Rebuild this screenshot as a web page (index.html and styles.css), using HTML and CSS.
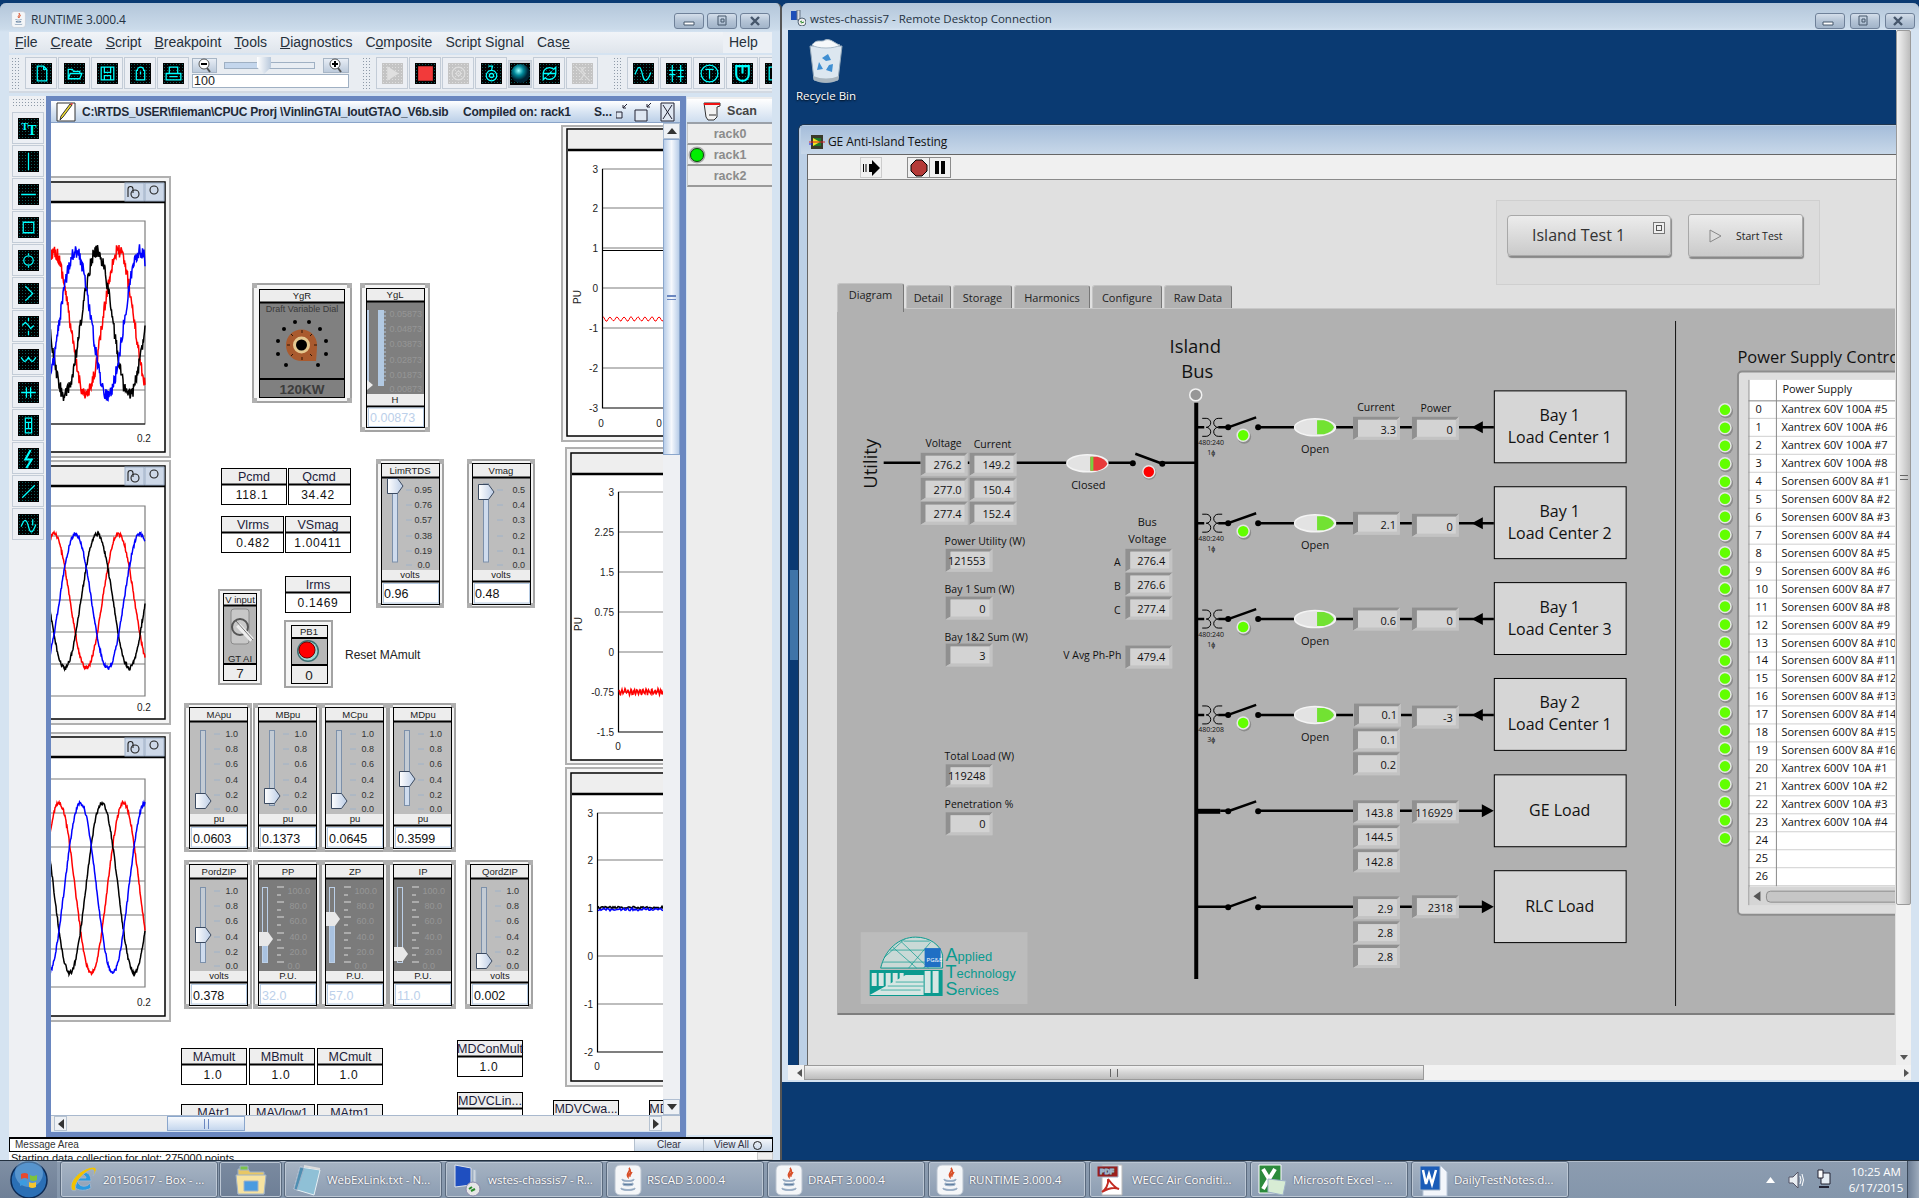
FILE: index.html
```html
<!DOCTYPE html>
<html lang="en">
<head>
<meta charset="utf-8">
<title>RUNTIME and Remote Desktop</title>
<link rel="stylesheet" href="styles.css">
</head>
<body>
<svg class="defs" width="0" height="0" aria-hidden="true">
  <defs>
    <linearGradient id="thumbfill" x1="0" x2="1"><stop offset="0" stop-color="#fff"/><stop offset="1" stop-color="#bccde6"/></linearGradient>
    <radialGradient id="ball" cx=".4" cy=".35"><stop offset="0" stop-color="#9ff"/><stop offset=".5" stop-color="#089"/><stop offset="1" stop-color="#023"/></radialGradient>
    <symbol id="java" viewBox="0 0 28 32"><rect x="1" y="1" width="26" height="30" rx="5" fill="#f4f6f8" stroke="#b9c3cf"/><path d="M15 4c3 3-4 5-1 9 0-3 5-4 1-9zM18 8c-1 2-3 3-2 5" fill="none" stroke="#d8502a" stroke-width="1.5"/><path d="M8 15c2 2 10 2 12 0v1c-1 2-11 2-12 0zM9 19c2 1 8 1 10 0v2c-2 1-8 1-10 0zM7 24c3 2 11 2 14 0v1c-3 2-11 2-14 0z" fill="#5a7a9c"/></symbol>
  </defs>
</svg>

<section class="win win-left">
  <header class="titlebar">
    <svg class="ti-java" width="15" height="17"><use href="#java"/></svg>
    <span class="title-text">RUNTIME 3.000.4</span>
    <div class="wcs">
      <button class="wc"><svg width="12" height="10"><path d="M1 6h10v3H1z" fill="#fff" stroke="#45566b"/></svg></button>
      <button class="wc"><svg width="12" height="12"><path d="M2 1h8v9H2zM5 4h3v3H5z" fill="none" stroke="#45566b"/></svg></button>
      <button class="wc"><svg width="12" height="12"><path d="M2 2l8 8M10 2l-8 8" stroke="#45566b" stroke-width="2.4"/></svg></button>
    </div>
  </header>
  <nav class="menubar">
    <span><u>F</u>ile</span><span><u>C</u>reate</span><span><u>S</u>cript</span><span><u>B</u>reakpoint</span><span><u>T</u>ools</span><span><u>D</u>iagnostics</span><span>C<u>o</u>mposite</span><span>Script Si<u>g</u>nal</span><span>Cas<u>e</u></span>
    <span class="help">Help</span>
  </nav>
  <div class="toolbar">
    <i class="grip"></i>
    <button class="tb"><span class="ti"><svg viewBox="0 0 20 20"><path d="M6 3h6l3 3v11H6zM12 3v3h3"/></svg></span></button>
    <button class="tb"><span class="ti"><svg viewBox="0 0 20 20"><path d="M4 15V6h4l1 2h6v2M4 15l2-5h11l-2 5z"/></svg></span></button>
    <button class="tb"><span class="ti"><svg viewBox="0 0 20 20"><path d="M4 4h12v12H4zM7 4v5h6V4M7 16v-4h6v4"/></svg></span></button>
    <button class="tb"><span class="ti"><svg viewBox="0 0 20 20"><path d="M7 7a3 3 0 0 1 6 0h1v9H6V7zM10 8v3"/></svg></span></button>
    <button class="tb"><span class="ti"><svg viewBox="0 0 20 20"><path d="M6 10V4h8v6M3 10h14v6H3zM6 13h8"/></svg></span></button>
    <div class="zoombox">
      <button class="zb"><svg width="18" height="15"><circle cx="8" cy="6" r="5" fill="#fff" stroke="#555"/><path d="M5 6h6" stroke="#000" stroke-width="2"/><path d="M11 10l3 4" stroke="#555" stroke-width="2"/></svg></button>
      <div class="zslider"><i class="zthumb"></i></div>
      <button class="zb"><svg width="18" height="15"><circle cx="8" cy="6" r="5" fill="#fff" stroke="#555"/><path d="M5 6h6M8 3v6" stroke="#000" stroke-width="2"/><path d="M11 10l3 4" stroke="#555" stroke-width="2"/></svg></button>
      <div class="zval">100</div>
    </div>
    <i class="grip g2"></i>
    <button class="tb"><span class="ti off"><svg viewBox="0 0 20 20"><path class="f" d="M5 3l11 7-11 7z"/></svg></span></button>
    <button class="tb"><span class="ti"><svg viewBox="0 0 20 20"><path class="r" d="M3 3h14v14H3z"/></svg></span></button>
    <button class="tb"><span class="ti off"><svg viewBox="0 0 20 20"><circle cx="10" cy="10" r="6"/><circle cx="10" cy="10" r="2"/></svg></span></button>
    <button class="tb"><span class="ti"><svg viewBox="0 0 20 20"><circle cx="10" cy="12" r="5"/><circle cx="10" cy="12" r="2"/><path d="M7 3h4l-1 4"/></svg></span></button>
    <button class="tb tb-s"><span class="ti"><svg viewBox="0 0 20 20"><circle class="ballc" cx="10" cy="10" r="9"/></svg></span></button>
    <button class="tb"><span class="ti"><svg viewBox="0 0 20 20"><path d="M4 10a6 6 0 0 1 10-4l2-2v6h-6l2-2M16 10a6 6 0 0 1-10 4l-2 2v-6h6l-2 2"/></svg></span></button>
    <button class="tb"><span class="ti off"><svg viewBox="0 0 20 20"><path d="M3 3l14 14M8 4l4 6-4 6M12 4l-3 4"/></svg></span></button>
    <i class="grip g3"></i>
    <button class="tb"><span class="ti"><svg viewBox="0 0 20 20"><path d="M2 11c3-9 5-9 7 0s5 6 8-2"/></svg></span></button>
    <button class="tb"><span class="ti"><svg viewBox="0 0 20 20"><path d="M6 2v16M14 2v16M3 7h6M11 13h6M3 11h6M11 7h6"/></svg></span></button>
    <button class="tb"><span class="ti"><svg viewBox="0 0 20 20"><circle cx="10" cy="10" r="8"/><path d="M6 6h8M10 6v9"/></svg></span></button>
    <button class="tb"><span class="ti"><svg viewBox="0 0 20 20"><path class="w2" d="M4 3h12v8a6 6 0 0 1-12 0zM10 3v7"/></svg></span></button>
    <button class="tb"><span class="ti"><svg viewBox="0 0 20 20"><path d="M4 4h12v12H4z"/></svg></span></button>
  </div>

  <div class="work">
    <aside class="toolcol">
      <i class="hgrip"></i>
      <button class="tb"><span class="ti"><svg viewBox="0 0 20 20"><text class="tt1" x="3" y="11">T</text><text class="tt2" x="9" y="16">T</text></svg></span></button>
      <button class="tb"><span class="ti"><svg viewBox="0 0 20 20"><path d="M10 2v16"/></svg></span></button>
      <button class="tb"><span class="ti"><svg viewBox="0 0 20 20"><path d="M3 10h14"/></svg></span></button>
      <button class="tb"><span class="ti"><svg viewBox="0 0 20 20"><path d="M5 5h10v10H5z"/></svg></span></button>
      <button class="tb"><span class="ti"><svg viewBox="0 0 20 20"><circle cx="10" cy="10" r="4.500"/><path d="M10 3v2M10 15v2"/></svg></span></button>
      <button class="tb"><span class="ti"><svg viewBox="0 0 20 20"><path d="M7 3l7 7-7 7"/></svg></span></button>
      <button class="tb"><span class="ti"><svg viewBox="0 0 20 20"><path d="M4 9l3-3 3 3 2 3 3-3M10 2v3M10 14v4"/></svg></span></button>
      <button class="tb"><span class="ti"><svg viewBox="0 0 20 20"><path d="M3 8c3 5 4 5 7 0 3 5 4 5 7 0"/></svg></span></button>
      <button class="tb"><span class="ti"><svg viewBox="0 0 20 20"><path d="M3 10h14M8 5v10M12 5v10"/></svg></span></button>
      <button class="tb"><span class="ti"><svg viewBox="0 0 20 20"><path d="M7 3h6v14H7zM7 7h6M7 13h6M10 7v6"/></svg></span></button>
      <button class="tb"><span class="ti"><svg viewBox="0 0 20 20"><path class="w2" d="M12 2L7 11h6l-5 8"/></svg></span></button>
      <button class="tb"><span class="ti"><svg viewBox="0 0 20 20"><path d="M4 16L16 4"/></svg></span></button>
      <button class="tb"><span class="ti"><svg viewBox="0 0 20 20"><path d="M3 12c3-8 5-8 7 0s4 6 7-2M14 5v6"/></svg></span></button>
    </aside>

    <div class="iframe">
      <header class="if-title">
        <svg class="pencil" width="20" height="20" viewBox="0 0 20 20"><path d="M1 1h18v18H1z" fill="#fff" stroke="#333"/><path d="M16 3L7 15l-3 3 1-4L14 2z" fill="#f5e030" stroke="#333"/><path d="M14 2l2 1 1-1-1-1z" fill="#e33"/></svg>
        <span class="if-path">C:\RTDS_USER\fileman\CPUC Prorj \VinlinGTAI_IoutGTAO_V6b.sib</span>
        <span class="if-comp">Compiled on: rack1</span>
        <span class="if-s">S...</span>
        <svg class="if-btn" width="60" height="20"><path d="M0 10h6v6H0zM19 8h12v11H19zM45 1h13v18H45z" fill="#dfe7f2" stroke="#223"/><path d="M11 2L7 6M7 3v3h3M35 1l-4 4M31 2v3h3M47 3l9 14M56 3l-9 14" fill="none" stroke="#223"/></svg>
      </header>
      <div class="if-mid">
        <div class="canvas">
<svg class="cv-svg" width="612" height="992" viewBox="51 124 612 992">
  <defs>
    <g id="th"><path d="M.5.5h10l5.500 7.500-5.500 7.500H.5z" fill="url(#thumbfill)" stroke="#3b4a60"/></g>
    <g id="thd"><path d="M0 0h9l5 7-5 7H0z" fill="#e8e8e8"/></g>
    <g id="sl">
      <rect x="1" y="1" width="66" height="147" fill="#f5f5f5" stroke="#a3a3a3" stroke-width="2"/>
      <path class="cn4" d="M0 0h5v5H0zM63 0h5v5h-5zM0 144h5v5H0zM63 144h5v5h-5z"/>
      <rect x="5.500" y="4.500" width="58" height="141" fill="#ededed" stroke="#000"/>
      <rect x="6" y="19" width="57" height="92" fill="currentColor"/>
      <path d="M6 18.500h57M6 122.500h57" stroke="#000" stroke-width="2"/>
      <rect x="7.500" y="124.500" width="55" height="19.500" fill="#fff" stroke="#b6cbe3"/>
    </g>
    <g id="sc1">
      <rect x="16.500" y="27.500" width="5" height="75" fill="#c3cbd4" stroke="#7c90aa"/>
      <path class="tk" d="M30 31h6M30 46h6M30 61h6M30 77h6M30 92h6M30 106h6"/>
    </g>
    <g id="t10"><text class="sn" x="54" y="34">1.0</text><text class="sn" x="54" y="49">0.8</text><text class="sn" x="54" y="64">0.6</text><text class="sn" x="54" y="80">0.4</text><text class="sn" x="54" y="95">0.2</text><text class="sn" x="54" y="109">0.0</text></g>
    <g id="sc2">
      <rect x="9.500" y="27.500" width="5" height="75" fill="#7b7b7b" stroke="#bcd0e8"/>
      <path class="tkd" d="M24 27h7M24 35h4M24 42h7M24 50h4M24 57h7M24 65h4M24 73h7M24 80h4M24 88h7M24 95h4M24 102h7"/>
      <text class="sd" x="57" y="34">100.0</text><text class="sd" x="54" y="49">80.0</text><text class="sd" x="54" y="64">60.0</text><text class="sd" x="54" y="80">40.0</text><text class="sd" x="54" y="95">20.0</text><text class="sd" x="47" y="109">0.0</text>
    </g>
    <g id="cell"><rect x=".5" y=".5" width="65" height="36" fill="#fff" stroke="#000"/><rect x="1" y="1" width="64" height="15" fill="#eee"/><path d="M0 16.500h66" stroke="#000" stroke-width="2"/></g>
    <g id="cell2"><rect x=".5" y=".5" width="62" height="36" fill="#fff" stroke="#000"/><rect x="1" y="1" width="61" height="15" fill="#eee"/><path d="M0 16.500h63" stroke="#000" stroke-width="2"/></g>
  </defs>

  <!-- left plots -->
  <g>
    <rect class="fo" x="20" y="178" width="150" height="280"/><rect class="fi" x="25" y="183" width="140" height="270"/>
    <rect class="hd" x="26" y="184" width="138" height="18"/><path class="hl" d="M26 203h139"/>
    <rect class="pb" x="125" y="184" width="19" height="18"/><rect class="pb" x="145" y="184" width="19" height="18"/>
    <path class="ph" d="M128 198v-8a2.500 2.500 0 0 1 5 0v4"/><circle class="ph" cx="135" cy="195" r="4"/><circle class="ph" cx="154" cy="191" r="4"/>
    <path class="gr" d="M40 222H145V425H40M40 255H145M40 289H145M40 323H145M40 357H145M40 391H145"/>
    <polyline id="p1r" class="wr"/><polyline id="p1k" class="wk"/><polyline id="p1b" class="wb"/>
    <path class="ax" d="M40 425H145"/>
    <text class="tk9" x="137" y="443">0.2</text>
  </g>
  <g>
    <rect class="fo" x="20" y="462" width="150" height="263"/><rect class="fi" x="25" y="467" width="140" height="253"/>
    <rect class="hd" x="26" y="468" width="138" height="18"/><path class="hl" d="M26 487h139"/>
    <rect class="pb" x="125" y="468" width="19" height="18"/><rect class="pb" x="145" y="468" width="19" height="18"/>
    <path class="ph" d="M128 482v-8a2.500 2.500 0 0 1 5 0v4"/><circle class="ph" cx="135" cy="479" r="4"/><circle class="ph" cx="154" cy="475" r="4"/>
    <path class="gr" d="M40 507H145V697H40M40 537H145M40 569H145M40 601H145M40 633H145M40 665H145"/>
    <polyline id="p2r" class="wr"/><polyline id="p2k" class="wk"/><polyline id="p2b" class="wb"/>
    <text class="tk9" x="137" y="712">0.2</text>
  </g>
  <g>
    <rect class="fo" x="20" y="734" width="150" height="288"/><rect class="fi" x="25" y="738" width="140" height="279"/>
    <rect class="hd" x="26" y="739" width="138" height="18"/><path class="hl" d="M26 758h139"/>
    <rect class="pb" x="125" y="739" width="19" height="18"/><rect class="pb" x="145" y="739" width="19" height="18"/>
    <path class="ph" d="M128 753v-8a2.500 2.500 0 0 1 5 0v4"/><circle class="ph" cx="135" cy="750" r="4"/><circle class="ph" cx="154" cy="746" r="4"/>
    <path class="gr" d="M40 780H145V988H40M40 814H145M40 848H145M40 882H145M40 916H145M40 950H145"/>
    <polyline id="p3r" class="wr"/><polyline id="p3k" class="wk"/><polyline id="p3b" class="wb"/>
    <text class="tk9" x="137" y="1007">0.2</text>
  </g>

  <!-- right plots -->
  <g>
    <rect class="fo" x="562" y="127" width="150" height="315"/><rect class="fi" x="567" y="130" width="140" height="307"/>
    <rect class="hd" x="568" y="131" width="130" height="19"/><path class="hl" d="M568 151h130"/>
    <path class="gr" d="M602 170H680M602 209H680M602 249H680M602 289H680M602 329H680M602 369H680"/>
    <path class="ax" d="M602.500 170V409H680M602 251.500H680"/>
    <polyline id="pAr" class="wr thin"/>
    <text class="ty" x="598" y="174">3</text><text class="ty" x="598" y="213">2</text><text class="ty" x="598" y="253">1</text><text class="ty" x="598" y="293">0</text><text class="ty" x="598" y="333">-1</text><text class="ty" x="598" y="373">-2</text><text class="ty" x="598" y="413">-3</text>
    <text class="tyc" x="601" y="428">0</text><text class="tyc" x="659" y="428">0</text>
    <text class="tyr" transform="translate(581 298) rotate(-90)">PU</text>
  </g>
  <g>
    <rect class="fo" x="566" y="449" width="150" height="316"/><rect class="fi" x="571" y="454" width="140" height="307"/>
    <rect class="hd" x="572" y="455" width="130" height="19"/><path class="hl" d="M572 475h130"/>
    <path class="gr" d="M618 493H680M618 533H680M618 573H680M618 613H680M618 653H680M618 693H680"/>
    <path class="ax" d="M618.500 493V733H680"/>
    <polyline id="pBr" class="wr"/>
    <text class="ty" x="614" y="497">3</text><text class="ty" x="614" y="537">2.25</text><text class="ty" x="614" y="577">1.5</text><text class="ty" x="614" y="617">0.75</text><text class="ty" x="614" y="657">0</text><text class="ty" x="614" y="697">-0.75</text><text class="ty" x="614" y="737">-1.5</text>
    <text class="tyc" x="618" y="751">0</text>
    <text class="tyr" transform="translate(582 625) rotate(-90)">PU</text>
  </g>
  <g>
    <rect class="fo" x="566" y="769" width="150" height="318"/><rect class="fi" x="571" y="774" width="140" height="308"/>
    <rect class="hd" x="572" y="775" width="130" height="19"/><path class="hl" d="M572 795h130"/>
    <path class="gr" d="M597 814H680M597 861H680M597 909H680M597 957H680M597 1005H680"/>
    <path class="ax" d="M597.500 814V1053H680"/>
    <polyline id="pCk" class="wk"/><polyline id="pCb" class="wb"/>
    <text class="ty" x="593" y="818">3</text><text class="ty" x="593" y="865">2</text><text class="ty" x="593" y="913">1</text><text class="ty" x="593" y="961">0</text><text class="ty" x="593" y="1009">-1</text><text class="ty" x="593" y="1057">-2</text>
    <text class="tyc" x="597" y="1071">0</text>
  </g>

  <!-- dial -->
  <g>
    <rect x="253" y="285" width="98" height="118" fill="#f5f5f5" stroke="#a3a3a3" stroke-width="2"/>
    <path class="cn4" d="M252 284h5v5h-5zM347 284h5v5h-5zM252 399h5v5h-5zM347 399h5v5h-5z"/>
    <rect x="259.500" y="290.500" width="85" height="108" fill="#808080" stroke="#000"/>
    <rect x="260" y="291" width="84" height="12" fill="#ededed"/>
    <path d="M260 303.500h84M260 380h84" stroke="#000" stroke-width="2"/>
    <text class="h9" x="302" y="300">YgR</text>
    <text class="dv" x="302" y="313">Draft Variable Dial</text>
    <text class="kw" x="302" y="395">120KW</text>
    <g><circle cx="295" cy="323" r="2"/><circle cx="309" cy="323" r="2"/><circle cx="284" cy="330" r="2"/><circle cx="320" cy="330" r="2"/><circle cx="278" cy="342" r="2"/><circle cx="326" cy="342" r="2"/><circle cx="278" cy="355" r="2"/><circle cx="326" cy="355" r="2"/><circle cx="286" cy="366" r="2"/><circle cx="318" cy="366" r="2"/></g>
    <path d="M286 346a15.500 15.500 0 1 1 31 0q0 6-1 16l-14 0a15.500 15.500 0 0 1-16-16z" fill="#a95a2e"/>
    <path d="M302 331v3M302 358v3M287 346h3M314 346h3M291 335l2 2M312 335l-2 2M291 357l2-2M312 357l-2-2" stroke="#301505"/>
    <circle cx="301.500" cy="346" r="8.500" fill="#e5c890"/><circle cx="301.500" cy="346" r="5.500" fill="#000"/>
  </g>
  <g>
    <rect x="361" y="285" width="68" height="147" fill="#f5f5f5" stroke="#a3a3a3" stroke-width="2"/>
    <path class="cn4" d="M360 284h5v5h-5zM425 284h5v5h-5zM360 428h5v5h-5zM425 428h5v5h-5z"/>
    <rect x="366.500" y="289.500" width="58" height="139" fill="#ededed" stroke="#000"/>
    <rect x="367" y="303" width="57" height="92" fill="#7f7f7f"/>
    <path d="M367 302.500h57M367 407.500h57" stroke="#000" stroke-width="2"/>
    <rect x="368.500" y="409" width="55" height="18.500" fill="#fff" stroke="#b6cbe3"/>
    <rect x="367" y="311" width="2" height="76" fill="#bcd0e8"/>
    <rect x="378" y="311" width="6" height="76" fill="#b2c9e2"/>
    <path d="M384 313h2M384 317h2M384 321h2M384 325h2M384 329h2M384 333h2M384 337h2M384 341h2M384 345h2M384 349h2M384 353h2M384 357h2M384 361h2M384 365h2M384 369h2M384 373h2M384 377h2M384 381h2" stroke="#b2c9e2"/>
    <path d="M367 381l6 5-6 5z" fill="#eee"/>
    <text class="h9" x="395" y="299">YgL</text>
    <text class="sd" x="422" y="318">0.05873</text><text class="sd" x="422" y="333">0.04873</text><text class="sd" x="422" y="348">0.03873</text><text class="sd" x="422" y="364">0.02873</text><text class="sd" x="422" y="379">0.01873</text><text class="sd" x="422" y="393">0.00873</text>
    <text class="h9" x="395" y="404">H</text>
    <text class="vdim" x="370" y="423">0.00873</text>
  </g>

  <!-- cells -->
  <g transform="translate(221 469)"><use href="#cell"/><text class="cn" x="33" y="13">Pcmd</text><text class="cv" x="31" y="31">118.1</text></g>
  <g transform="translate(288 469)"><use href="#cell2"/><text class="cn" x="31" y="13">Qcmd</text><text class="cv" x="30" y="31">34.42</text></g>
  <g transform="translate(221 517)"><use href="#cell2"/><text class="cn" x="32" y="13">Vlrms</text><text class="cv" x="32" y="31">0.482</text></g>
  <g transform="translate(285 517)"><use href="#cell"/><text class="cn" x="33" y="13">VSmag</text><text class="cv" x="33" y="31">1.00411</text></g>
  <g transform="translate(285 577)"><use href="#cell"/><text class="cn" x="33" y="13">Irms</text><text class="cv" x="33" y="31">0.1469</text></g>
  <g transform="translate(181 1049)"><use href="#cell"/><text class="cn" x="33" y="13">MAmult</text><text class="cv" x="32" y="31">1.0</text></g>
  <g transform="translate(249 1049)"><use href="#cell"/><text class="cn" x="33" y="13">MBmult</text><text class="cv" x="32" y="31">1.0</text></g>
  <g transform="translate(317 1049)"><use href="#cell"/><text class="cn" x="33" y="13">MCmult</text><text class="cv" x="32" y="31">1.0</text></g>
  <g transform="translate(457 1041)"><use href="#cell"/><text class="cn" x="33" y="13">MDConMult</text><text class="cv" x="32" y="31">1.0</text></g>
  <g transform="translate(181 1105)"><use href="#cell"/><text class="cn" x="33" y="13">MAtr1</text></g>
  <g transform="translate(249 1105)"><use href="#cell"/><text class="cn" x="33" y="13">MAVlow1</text></g>
  <g transform="translate(317 1105)"><use href="#cell"/><text class="cn" x="33" y="13">MAtm1</text></g>
  <g transform="translate(457 1093)"><use href="#cell"/><text class="cn" x="33" y="13">MDVCLin...</text></g>
  <g transform="translate(553 1101)"><use href="#cell"/><text class="cn" x="33" y="13">MDVCwa...</text></g>
  <g transform="translate(649 1101)"><use href="#cell"/><text class="cn" x="10" y="13">MD</text></g>

  <!-- sliders -->
  <g transform="translate(376 460)"><use href="#sl" class="lt"/><rect x="16.500" y="25" width="5" height="78" fill="#cfdcee" stroke="#7c90aa"/><path class="tk" d="M30 31h6M30 46h6M30 61h6M30 77h6M30 92h6M30 106h6"/><text class="sn" x="56" y="34">0.95</text><text class="sn" x="56" y="49">0.76</text><text class="sn" x="56" y="64">0.57</text><text class="sn" x="56" y="80">0.38</text><text class="sn" x="56" y="95">0.19</text><text class="sn" x="54" y="109">0.0</text><text class="h9" x="34" y="15">LimRTDS</text><text class="h9" x="34" y="119">volts</text><text class="v12" x="8" y="139">0.96</text><use href="#th" x="11" y="19"/></g>
  <g transform="translate(467 460)"><use href="#sl" class="lt"/><rect x="16.500" y="25" width="5" height="78" fill="#cfdcee" stroke="#7c90aa"/><path class="tk" d="M30 31h6M30 46h6M30 61h6M30 77h6M30 92h6M30 106h6"/><text class="sn" x="58" y="34">0.5</text><text class="sn" x="58" y="49">0.4</text><text class="sn" x="58" y="64">0.3</text><text class="sn" x="58" y="80">0.2</text><text class="sn" x="58" y="95">0.1</text><text class="sn" x="58" y="109">0.0</text><text class="h9" x="34" y="15">Vmag</text><text class="h9" x="34" y="119">volts</text><text class="v12" x="8" y="139">0.48</text><use href="#th" x="11" y="25"/></g>

  <g transform="translate(184 704)"><use href="#sl" class="lt"/><use href="#sc1"/><use href="#t10"/><text class="h9" x="35" y="15">MApu</text><text class="h9" x="35" y="119">pu</text><text class="v12" x="9" y="140">0.0603</text><use href="#th" x="11" y="90"/></g>
  <g transform="translate(253 704)"><use href="#sl" class="lt"/><use href="#sc1"/><use href="#t10"/><text class="h9" x="35" y="15">MBpu</text><text class="h9" x="35" y="119">pu</text><text class="v12" x="9" y="140">0.1373</text><use href="#th" x="11" y="85"/></g>
  <g transform="translate(320 704)"><use href="#sl" class="lt"/><use href="#sc1"/><use href="#t10"/><text class="h9" x="35" y="15">MCpu</text><text class="h9" x="35" y="119">pu</text><text class="v12" x="9" y="140">0.0645</text><use href="#th" x="11" y="90"/></g>
  <g transform="translate(388 704)"><use href="#sl" class="lt"/><use href="#sc1"/><use href="#t10"/><rect x="17" y="84" width="4" height="18" fill="#cfdcee"/><text class="h9" x="35" y="15">MDpu</text><text class="h9" x="35" y="119">pu</text><text class="v12" x="9" y="140">0.3599</text><use href="#th" x="11" y="68"/></g>

  <g transform="translate(184 861)"><use href="#sl" class="lt"/><use href="#sc1"/><use href="#t10"/><rect x="17" y="82" width="4" height="20" fill="#cfdcee"/><text class="h9" x="35" y="15">PordZIP</text><text class="h9" x="35" y="119">volts</text><text class="v12" x="9" y="140">0.378</text><use href="#th" x="11" y="67"/></g>
  <g transform="translate(253 861)"><use href="#sl" class="dk"/><use href="#sc2"/><rect x="10" y="84" width="4" height="18" fill="#a9c2e0"/><text class="h9" x="35" y="15">PP</text><text class="h9" x="35" y="119">P.U.</text><text class="vd12" x="9" y="140">32.0</text><use href="#thd" x="6" y="72"/></g>
  <g transform="translate(320 861)"><use href="#sl" class="dk"/><use href="#sc2"/><rect x="10" y="65" width="4" height="37" fill="#a9c2e0"/><text class="h9" x="35" y="15">ZP</text><text class="h9" x="35" y="119">P.U.</text><text class="vd12" x="9" y="140">57.0</text><use href="#thd" x="6" y="52"/></g>
  <g transform="translate(388 861)"><use href="#sl" class="dk"/><use href="#sc2"/><text class="h9" x="35" y="15">IP</text><text class="h9" x="35" y="119">P.U.</text><text class="vd12" x="9" y="140">11.0</text><use href="#thd" x="6" y="87"/></g>
  <g transform="translate(465 861)"><use href="#sl" class="lt"/><use href="#sc1"/><use href="#t10"/><text class="h9" x="35" y="15">QordZIP</text><text class="h9" x="35" y="119">volts</text><text class="v12" x="9" y="140">0.002</text><use href="#th" x="11" y="93"/></g>

  <!-- switch + pushbutton -->
  <g>
    <rect x="219" y="591" width="42" height="94" fill="#f5f5f5" stroke="#a3a3a3" stroke-width="2"/>
    <rect x="223.500" y="594.500" width="33" height="87" fill="#ededed" stroke="#000"/>
    <rect x="224" y="607" width="32" height="57" fill="#b5b5b5"/>
    <path d="M224 606.500h32M224 665h32" stroke="#000" stroke-width="2"/>
    <rect x="231" y="610" width="18" height="35" rx="3" fill="#c8c8c8" stroke="#8a8a8a"/>
    <circle cx="240" cy="628" r="8" fill="none" stroke="#555" stroke-width="2"/>
    <path d="M238 626l14 15" stroke="#eee" stroke-width="5"/><path d="M236 622l17 19" fill="none" stroke="#555" stroke-width=".8"/>
    <text class="h9" x="240" y="604">V input</text>
    <text class="h9" x="240" y="663">GT AI</text>
    <text class="v14" x="240" y="679">7</text>
  </g>
  <g>
    <rect x="285" y="622" width="47" height="66" fill="#f5f5f5" stroke="#a3a3a3" stroke-width="2"/>
    <rect x="291.500" y="626.500" width="36" height="58" fill="#ededed" stroke="#000"/>
    <rect x="292" y="640" width="35" height="26" fill="#b8b8b8"/>
    <path d="M292 639h35M292 666h35" stroke="#000" stroke-width="2"/>
    <circle cx="308" cy="652" r="11" fill="#3a6d70"/><circle cx="308" cy="652" r="9.500" fill="#9fd8d5"/><circle cx="307" cy="651" r="8" fill="#f00" stroke="#700"/>
    <text class="h9" x="309" y="636">PB1</text>
    <text class="v14" x="309" y="681">0</text>
  </g>
  <text class="rm" x="345" y="660">Reset MAmult</text>
</svg>
        </div>
        <div class="vscroll">
          <button class="vb"><svg width="10" height="6"><path d="M0 6L5 0l5 6z" fill="#333"/></svg></button>
          <div class="vthumb"><i></i></div>
          <div class="vtrack"></div>
          <button class="vb"><svg width="10" height="6"><path d="M0 0l5 6 5-6z" fill="#333"/></svg></button>
        </div>
      </div>
      <div class="hscroll">
        <button class="hb"><svg width="6" height="10"><path d="M6 0L0 5l6 5z" fill="#333"/></svg></button>
        <div class="htrack"><div class="hthumb"><i></i></div></div>
        <button class="hb"><svg width="6" height="10"><path d="M0 0l6 5-6 5z" fill="#333"/></svg></button>
      </div>
    </div>

    <aside class="scanpanel">
      <button class="scan"><svg width="20" height="20" viewBox="0 0 20 20"><path d="M2 2h16v3l-3 1v10l-3 3H6l-2-3z" fill="#f2f2f2" stroke="#333"/><path d="M2 3h16" stroke="#e11" stroke-width="2"/><path d="M7 14h7" stroke="#333"/></svg><span>Scan</span></button>
      <div class="rack">rack0</div>
      <div class="rack"><i class="rled"></i>rack1</div>
      <div class="rack">rack2</div>
    </aside>
  </div>

  <div class="msgrow">
    <span class="msg">Message Area</span>
    <button class="msgb">Clear</button>
    <button class="msgb">View All <i class="vring"></i></button>
  </div>
  <div class="statusline"><span>Starting data collection for plot: 275000 points</span><i class="st-sb"></i></div>
</section>

<section class="win win-rdp">
  <header class="titlebar rdp-title">
    <svg width="15" height="16" viewBox="0 0 15 16"><path d="M0 1h7v9H0z" fill="#1d4fb8"/><path d="M6 0h3v10H6z" fill="#d9dde2" stroke="#678"/><circle cx="11" cy="12" r="4" fill="#eee" stroke="#567"/><path d="M9 12l2-1M10 13l3-1" stroke="#2a8a2a"/></svg>
    <span class="title-text">wstes-chassis7 - Remote Desktop Connection</span>
    <div class="wcs rdp-wcs">
      <button class="wc"><svg width="12" height="10"><path d="M1 6h10v3H1z" fill="#fff" stroke="#45566b"/></svg></button>
      <button class="wc"><svg width="12" height="12"><path d="M2 1h8v9H2zM5 4h3v3H5z" fill="none" stroke="#45566b"/></svg></button>
      <button class="wc"><svg width="12" height="12"><path d="M2 2l8 8M10 2l-8 8" stroke="#45566b" stroke-width="2.4"/></svg></button>
    </div>
  </header>
  <div class="rdp-client">
    <div class="remote">
      <i class="behind"></i>
      <div class="bin">
        <svg width="38" height="46" viewBox="0 0 38 46"><path d="M3 8h32l-4 34q-12 5-24 0z" fill="#dce7f0" stroke="#93a7b8"/><path d="M5 7c5-7 9-2 13-5 6-2 10 4 15 5-5 4-23 4-28 0z" fill="#f6f9fb" stroke="#a9bac8"/><path d="M15 20l6-4 3 6-5 1zM26 26l-1 8-6-2 3-5zM12 24l4 7-6 1z" fill="#3f8fd2"/><path d="M6 38q13 5 26 0l-1 4q-12 5-24 0z" fill="#aab6bf"/></svg>
        <span>Recycle Bin</span>
      </div>
      <div class="gewin">
        <header class="ge-title">
          <svg width="16" height="16" viewBox="0 0 16 16"><path d="M2 1h12v14H2z" fill="#3a3a2a"/><path d="M4 4h8v8H4z" fill="#1f7a2a"/><path d="M4 4l7 4-7 4z" fill="#f5e520"/><path d="M0 8h16" stroke="#d22" /><path d="M0 10h4" stroke="#22d"/></svg>
          <span>GE Anti-Island Testing</span>
        </header>
        <div class="ge-inner">
          <div class="ge-tools">
            <button class="gt g-run"><svg width="18" height="16" viewBox="0 0 18 16"><path d="M7 4h3V0l8 8-8 8v-4H7zM1 4h1v8H1zM3.500 4h1v8h-1z"/></svg></button>
            <button class="gt g-stop"><svg width="18" height="18"><path d="M6 1h6l5 5v6l-5 5H6l-5-5V6z" fill="#b43a38" stroke="#000"/></svg></button>
            <button class="gt"><svg width="12" height="13"><path d="M1 0h4v13H1zM7 0h4v13H7z"/></svg></button>
          </div>
          <div class="ge-top">
            <div class="islandbox">
              <div class="ring"><span>Island Test 1</span><i class="ring-arrow"></i></div>
              <div class="starttest"><svg width="13" height="14"><path d="M1 1l11 6-11 6z" fill="#ddd" stroke="#888"/></svg><span>Start Test</span></div>
            </div>
          </div>
          <div class="tabs">
            <span class="tab tab-on">Diagram</span><span class="tab w45">Detail</span><span class="tab w59">Storage</span><span class="tab w76">Harmonics</span><span class="tab w70">Configure</span><span class="tab w68">Raw Data</span>
          </div>
<svg class="panel" width="1058" height="707" viewBox="837 308 1058 707">
  <defs>
    <g id="ind"><rect width="47" height="23" fill="#bdbdbd"/><path d="M0 0h47l-3 3H5v17l-5 3z" fill="#909090"/><path d="M47 0v23H0l5-3h39V3z" fill="#c3c3c3"/><rect x="5" y="3" width="39" height="17" fill="#d3d3d3"/></g>
    <g id="ledg"><circle cx="1" cy="1.500" r="7" fill="#8c8c8c"/><circle r="6" fill="#62ff00" stroke="#e6e6e6" stroke-width="1.500"/></g>
    <g id="feeder">
      <path class="ln" d="M1196 0H1204M1218 0H1228M1258 0H1294M1335 0H1353M1400 0H1412M1459 0H1494"/>
      <path class="coil" d="M1202-9h4a4.500 4.500 0 0 1 0 9a4.500 4.500 0 0 1 0 9h-4M1222-9h-4a4.500 4.500 0 0 0 0 9a4.500 4.500 0 0 0 0 9h4"/>
      <circle cx="1228" r="3"/><circle cx="1258" r="3"/><path class="ln" d="M1228 0L1256-10"/>
      <use href="#ledg" x="1243" y="8"/>
      <ellipse cx="1315" rx="20.500" ry="8.500" fill="#e3e3e3" stroke="#f4f4f4" stroke-width="1.500"/>
      <path d="M1317-7h7q8 2 10 7q-2 5-10 7h-7z" fill="#72e232"/>
      <text class="l12 c" x="1315" y="26">Open</text>
      <path d="M1472 0l11-6V6z"/>
      <rect x="1494.500" y="-36.500" width="132" height="72" fill="#d6d6d6" stroke="#000"/>
    </g>
    <pattern id="rows" width="10" height="18" patternUnits="userSpaceOnUse" x="0" y="400"><rect width="10" height="18" fill="#fff"/><path d="M0 17.500h10" stroke="#cfcfcf"/></pattern>
  </defs>
  <path class="frameb" d="M837 1014H1895"/>
  <path class="sep" d="M1676 320V1006"/>

  <text class="l18 c" transform="translate(876 463) rotate(-90)">Utility</text>
  <text class="l18 c" x="1195" y="352">Island</text><text class="l18 c" x="1197" y="377">Bus</text>
  <circle cx="1195.500" cy="394" r="6" fill="#969696" stroke="#f1f1f1" stroke-width="1.500"/>
  <path class="bus" d="M1196 402V979"/>
  <path class="ln" d="M883 462H1066M1107 462H1130M1162 462H1196"/>
  <text class="l11 c" x="943" y="446">Voltage</text><text class="l11 c" x="992" y="447">Current</text>

  <use href="#ind" x="920" y="452"/><use href="#ind" x="969" y="452"/><use href="#ind" x="920" y="477"/><use href="#ind" x="969" y="477"/><use href="#ind" x="920" y="501"/><use href="#ind" x="969" y="501"/>
  <text class="iv" x="961" y="468">276.2</text><text class="iv" x="1010" y="468">149.2</text><text class="iv" x="961" y="493">277.0</text><text class="iv" x="1010" y="493">150.4</text><text class="iv" x="961" y="517">277.4</text><text class="iv" x="1010" y="517">152.4</text>

  <ellipse cx="1087" cy="462.500" rx="20.500" ry="8.500" fill="#e3e3e3" stroke="#f4f4f4" stroke-width="1.500"/>
  <path d="M1090 456h7q8 2 10 7q-2 5-10 7h-7z" fill="#e83a3a"/><path d="M1090 456h3v14h-3z" fill="#79d040"/>
  <text class="l12 c" x="1088" y="488">Closed</text>
  <circle cx="1132.500" cy="462.500" r="3"/><circle cx="1162" cy="463" r="3"/><path class="ln" d="M1135 453L1162 463"/>
  <circle cx="1149" cy="472" r="7" fill="#8c8c8c"/><circle cx="1148.500" cy="471" r="6" fill="#f00" stroke="#e6e6e6" stroke-width="1.500"/>

  <g transform="translate(0 426.500)"><use href="#feeder"/></g>
  <g transform="translate(0 522.500)"><use href="#feeder"/></g>
  <g transform="translate(0 618.500)"><use href="#feeder"/></g>
  <g transform="translate(0 714.500)"><use href="#feeder"/></g>
  <text class="tf" x="1211" y="444">480:240</text><text class="tf" x="1211" y="454">1ϕ</text>
  <text class="tf" x="1211" y="540">480:240</text><text class="tf" x="1211" y="550">1ϕ</text>
  <text class="tf" x="1211" y="636">480:240</text><text class="tf" x="1211" y="646">1ϕ</text>
  <text class="tf" x="1211" y="732">480:208</text><text class="tf" x="1211" y="742">3ϕ</text>

  <text class="l11 c" x="1376" y="410">Current</text><text class="l11 c" x="1436" y="411">Power</text>
  <use href="#ind" x="1353" y="416"/><use href="#ind" x="1412" y="416"/>
  <text class="iv" x="1396" y="433">3.3</text><text class="iv" x="1453" y="433">0</text>
  <use href="#ind" x="1353" y="511"/><use href="#ind" x="1412" y="513"/>
  <text class="iv" x="1396" y="528">2.1</text><text class="iv" x="1453" y="530">0</text>
  <use href="#ind" x="1353" y="607"/><use href="#ind" x="1412" y="607"/>
  <text class="iv" x="1396" y="624">0.6</text><text class="iv" x="1453" y="624">0</text>
  <use href="#ind" x="1354" y="703"/><use href="#ind" x="1412" y="705"/><use href="#ind" x="1353" y="728"/><use href="#ind" x="1353" y="752"/>
  <text class="iv" x="1397" y="719">0.1</text><text class="iv" x="1453" y="722">-3</text><text class="iv" x="1396" y="744">0.1</text><text class="iv" x="1396" y="769">0.2</text>

  <text class="l15 c" x="1560" y="420">Bay 1</text><text class="l15 c" x="1560" y="442">Load Center 1</text>
  <text class="l15 c" x="1560" y="516">Bay 1</text><text class="l15 c" x="1560" y="538">Load Center 2</text>
  <text class="l15 c" x="1560" y="612">Bay 1</text><text class="l15 c" x="1560" y="634">Load Center 3</text>
  <text class="l15 c" x="1560" y="708">Bay 2</text><text class="l15 c" x="1560" y="730">Load Center 1</text>

  <!-- GE and RLC -->
  <path class="lnb" d="M1196 811H1220"/>
  <path class="ln" d="M1220 810.500H1228M1258 810.500H1353M1400 810.500H1412M1459 810.500H1484M1196 906.500H1228M1258 906.500H1353M1400 906.500H1412M1459 906.500H1484"/>
  <circle cx="1228" cy="811" r="3"/><circle cx="1258" cy="811" r="3"/><path class="ln" d="M1228 811L1256 801"/>
  <circle cx="1228" cy="907" r="3"/><circle cx="1258" cy="907" r="3"/><path class="ln" d="M1228 907L1256 897"/>
  <path d="M1482 804l12 6.500-12 6.500zM1482 900l12 6.500-12 6.500z"/>
  <use href="#ind" x="1353" y="800"/><use href="#ind" x="1353" y="825"/><use href="#ind" x="1353" y="849"/><use href="#ind" x="1412" y="800"/>
  <text class="iv" x="1393" y="817">143.8</text><text class="iv" x="1393" y="841">144.5</text><text class="iv" x="1393" y="866">142.8</text><text class="iv" x="1453" y="817">116929</text>
  <use href="#ind" x="1353" y="896"/><use href="#ind" x="1353" y="921"/><use href="#ind" x="1353" y="945"/><use href="#ind" x="1412" y="895"/>
  <text class="iv" x="1393" y="913">2.9</text><text class="iv" x="1393" y="937">2.8</text><text class="iv" x="1393" y="961">2.8</text><text class="iv" x="1453" y="912">2318</text>
  <rect x="1494.500" y="774.500" width="132" height="72" fill="#d6d6d6" stroke="#000"/><text class="l15 c" x="1560" y="816">GE Load</text>
  <rect x="1494.500" y="870.500" width="132" height="72" fill="#d6d6d6" stroke="#000"/><text class="l15 c" x="1560" y="912">RLC Load</text>

  <!-- totals -->
  <text class="l11" x="944" y="544">Power Utility (W)</text><use href="#ind" x="945" y="548"/><text class="iv" x="985" y="564">121553</text>
  <text class="l11" x="944" y="592">Bay 1 Sum (W)</text><use href="#ind" x="945" y="596"/><text class="iv" x="985" y="612">0</text>
  <text class="l11" x="944" y="640">Bay 1&amp;2 Sum (W)</text><use href="#ind" x="945" y="643"/><text class="iv" x="985" y="660">3</text>
  <text class="l11" x="944" y="760">Total Load (W)</text><use href="#ind" x="945" y="764"/><text class="iv" x="985" y="780">119248</text>
  <text class="l11" x="944" y="808">Penetration %</text><use href="#ind" x="945" y="812"/><text class="iv" x="985" y="828">0</text>
  <text class="l12 c" x="1147" y="525">Bus</text><text class="l12 c" x="1147" y="542">Voltage</text>
  <text class="l11 c" x="1117" y="565">A</text><use href="#ind" x="1125" y="548"/><text class="iv" x="1165" y="564">276.4</text>
  <text class="l11 c" x="1117" y="589">B</text><use href="#ind" x="1125" y="572"/><text class="iv" x="1165" y="588">276.6</text>
  <text class="l11 c" x="1117" y="613">C</text><use href="#ind" x="1125" y="596"/><text class="iv" x="1165" y="612">277.4</text>
  <text class="l11 r" x="1121" y="659">V Avg Ph-Ph</text><use href="#ind" x="1125" y="645"/><text class="iv" x="1165" y="661">479.4</text>

  <!-- logo -->
  <rect x="860" y="932" width="167" height="72" fill="#bcbcbc"/>
  <path d="M880 968C884 950 898 937 915 937c14 0 25 8 27 18v13z" fill="#c9d9d6" stroke="#0a9a8f"/>
  <path class="lg" d="M884 957l20-18M892 947l24 21M900 941l28 27M930 942l-22 26M939 950l-16 18M882 962l58 0M889 950l50 0M903 941l26 0"/>
  <rect x="924" y="948" width="16" height="19" fill="#1f6fc4"/>
  <text class="pge" x="926" y="962">PG&amp;E</text>
  <path d="M869 970h73v26h-73z" fill="#0a9a8f"/>
  <path d="M871 973h5v13h-5zM878 973h5v13h-5zM885 973h5v13h-5zM892 973h5v13h-5zM899 973h4v13h-4zM924 971h6v22h-6zM932 971h6v22h-6z" fill="#d6e6e3"/>
  <path d="M869 995L905 975l18 0v20z" fill="#d6e6e3"/><path class="lg" d="M880 990h40M887 986h36M895 982h28"/>
  <text class="lo" x="945" y="961"><tspan class="lob">A</tspan>pplied</text>
  <text class="lo" x="945" y="978"><tspan class="lob">T</tspan>echnology</text>
  <text class="lo" x="945" y="995"><tspan class="lob">S</tspan>ervices</text>

  <!-- power supply table -->
  <text class="l16" x="1738" y="362">Power Supply Control</text>
  <rect x="1738.500" y="370.500" width="240" height="544" rx="4" fill="#dedede" stroke="#8d8d8d" stroke-width="2"/>
  <rect x="1749" y="379" width="220" height="21" fill="#fff"/>
  <rect x="1749" y="400" width="220" height="486" fill="url(#rows)"/>
  <path d="M1749.500 379V905M1777 379V886M1749 400H1969" class="tblines"/>
  <rect x="1750" y="887" width="220" height="18" fill="#d5d5d5"/>
  <path d="M1754 896l7-5v10z" fill="#555"/>
  <rect x="1767" y="891" width="200" height="11" rx="4" fill="#c6c6c6" stroke="#8d8d8d"/>
  <text class="ps" x="1783" y="392">Power Supply</text>
  <text class="ps" x="1756" y="412">0</text><text class="ps" x="1782" y="412">Xantrex 60V 100A #5</text>
  <text class="ps" x="1756" y="430">1</text><text class="ps" x="1782" y="430">Xantrex 60V 100A #6</text>
  <text class="ps" x="1756" y="448">2</text><text class="ps" x="1782" y="448">Xantrex 60V 100A #7</text>
  <text class="ps" x="1756" y="466">3</text><text class="ps" x="1782" y="466">Xantrex 60V 100A #8</text>
  <text class="ps" x="1756" y="484">4</text><text class="ps" x="1782" y="484">Sorensen 600V 8A #1</text>
  <text class="ps" x="1756" y="502">5</text><text class="ps" x="1782" y="502">Sorensen 600V 8A #2</text>
  <text class="ps" x="1756" y="520">6</text><text class="ps" x="1782" y="520">Sorensen 600V 8A #3</text>
  <text class="ps" x="1756" y="538">7</text><text class="ps" x="1782" y="538">Sorensen 600V 8A #4</text>
  <text class="ps" x="1756" y="556">8</text><text class="ps" x="1782" y="556">Sorensen 600V 8A #5</text>
  <text class="ps" x="1756" y="574">9</text><text class="ps" x="1782" y="574">Sorensen 600V 8A #6</text>
  <text class="ps" x="1756" y="592">10</text><text class="ps" x="1782" y="592">Sorensen 600V 8A #7</text>
  <text class="ps" x="1756" y="610">11</text><text class="ps" x="1782" y="610">Sorensen 600V 8A #8</text>
  <text class="ps" x="1756" y="628">12</text><text class="ps" x="1782" y="628">Sorensen 600V 8A #9</text>
  <text class="ps" x="1756" y="646">13</text><text class="ps" x="1782" y="646">Sorensen 600V 8A #10</text>
  <text class="ps" x="1756" y="664">14</text><text class="ps" x="1782" y="664">Sorensen 600V 8A #11</text>
  <text class="ps" x="1756" y="682">15</text><text class="ps" x="1782" y="682">Sorensen 600V 8A #12</text>
  <text class="ps" x="1756" y="700">16</text><text class="ps" x="1782" y="700">Sorensen 600V 8A #13</text>
  <text class="ps" x="1756" y="718">17</text><text class="ps" x="1782" y="718">Sorensen 600V 8A #14</text>
  <text class="ps" x="1756" y="736">18</text><text class="ps" x="1782" y="736">Sorensen 600V 8A #15</text>
  <text class="ps" x="1756" y="754">19</text><text class="ps" x="1782" y="754">Sorensen 600V 8A #16</text>
  <text class="ps" x="1756" y="772">20</text><text class="ps" x="1782" y="772">Xantrex 600V 10A #1</text>
  <text class="ps" x="1756" y="790">21</text><text class="ps" x="1782" y="790">Xantrex 600V 10A #2</text>
  <text class="ps" x="1756" y="808">22</text><text class="ps" x="1782" y="808">Xantrex 600V 10A #3</text>
  <text class="ps" x="1756" y="826">23</text><text class="ps" x="1782" y="826">Xantrex 600V 10A #4</text>
  <text class="ps" x="1756" y="844">24</text><text class="ps" x="1756" y="862">25</text><text class="ps" x="1756" y="880">26</text>
  <use href="#ledg" x="1725.500" y="409"/><use href="#ledg" x="1725.500" y="427"/><use href="#ledg" x="1725.500" y="445"/><use href="#ledg" x="1725.500" y="463"/><use href="#ledg" x="1725.500" y="481"/><use href="#ledg" x="1725.500" y="498"/><use href="#ledg" x="1725.500" y="516"/><use href="#ledg" x="1725.500" y="534"/><use href="#ledg" x="1725.500" y="552"/><use href="#ledg" x="1725.500" y="570"/><use href="#ledg" x="1725.500" y="588"/><use href="#ledg" x="1725.500" y="606"/><use href="#ledg" x="1725.500" y="624"/><use href="#ledg" x="1725.500" y="642"/><use href="#ledg" x="1725.500" y="660"/><use href="#ledg" x="1725.500" y="678"/><use href="#ledg" x="1725.500" y="694"/><use href="#ledg" x="1725.500" y="712"/><use href="#ledg" x="1725.500" y="730"/><use href="#ledg" x="1725.500" y="748"/><use href="#ledg" x="1725.500" y="766"/><use href="#ledg" x="1725.500" y="784"/><use href="#ledg" x="1725.500" y="802"/><use href="#ledg" x="1725.500" y="820"/><use href="#ledg" x="1725.500" y="838"/>
</svg>
        </div>
      </div>
    </div>
    <div class="rv">
      <div class="rv-thumb"><i></i></div>
      <div class="rv-track"></div>
      <button class="rv-btn"><svg width="8" height="5"><path d="M0 0l4 5 4-5z" fill="#555"/></svg></button>
    </div>
  </div>
  <div class="rh">
    <button class="rh-btn"><svg width="5" height="8"><path d="M5 0L0 4l5 4z" fill="#555"/></svg></button>
    <div class="rh-thumb"><i></i></div>
    <div class="rh-track"></div>
    <button class="rh-btn"><svg width="5" height="8"><path d="M0 0l5 4-5 4z" fill="#555"/></svg></button>
  </div>
</section>

<footer class="taskbar">
  <div class="orb"><svg width="38" height="38" viewBox="0 0 38 38"><circle cx="19" cy="19" r="18" fill="#2b6fb5" stroke="#0b2a55" stroke-width="1.500"/><circle cx="19" cy="12" r="14" fill="#8fc2ea" opacity=".45"/><path d="M11 13q4-2 7 0v5q-3-2-7 0z" fill="#e8492f"/><path d="M20 14q3 2 7 0v5q-4 2-7 0z" fill="#7dc23c"/><path d="M10 20q4-2 7 0v5q-3-2-7 0z" fill="#3c9be0"/><path d="M19 21q3 2 7 0v5q-4 2-7 0z" fill="#f5c430"/></svg></div>
  <div class="tk"><svg class="tic" width="30" height="32" viewBox="0 0 30 32"><path d="M5 19c0-7 4-11 10-11 6 0 8 4 8 9H10c0 6 9 7 12 2l1 5c-6 4-18 3-18-5zM10 14h8c0-4-7-4-8 0z" fill="#2a9ae0"/><path d="M4 26C-1 18 14 3 26 3c4 1 2 6-1 9 2-5 1-7-2-6-6 1-18 13-15 20-1 1-3 1-4 0z" fill="#f2c200"/></svg><span>20150617 - Box - ...</span></div>
  <div class="tk tk-f"><svg width="34" height="34" viewBox="0 0 34 34"><path d="M4 6h10l2 3h14v22H4z" fill="#e8c765"/><path d="M2 12h30l-2 19H4z" fill="#f7e3a0"/><path d="M10 18h14v10H10z" fill="#4a9be0"/><path d="M6 3h8v4H6z" fill="#7ac24a"/></svg></div>
  <div class="tk"><svg class="tic" width="30" height="34" viewBox="0 0 30 34"><path d="M8 4l20 3-6 25-20-6z" fill="#8fc0d6" stroke="#e6f0f5"/><path d="M8 4l4 1-7 22-3-1z" fill="#4f8fb2"/><path d="M12 3l16 3" stroke="#ddd" stroke-width="2"/></svg><span>WebExLink.txt - N...</span></div>
  <div class="tk"><svg class="tic" width="30" height="34" viewBox="0 0 30 34"><path d="M2 2l16 3v17L2 24z" fill="#1f4fc0" stroke="#dfe4ea"/><path d="M20 6l3 1v20l-3 1z" fill="#cfd6de"/><circle cx="20" cy="26" r="7" fill="#e6e6e6" stroke="#88a"/><path d="M16 26l3-2M18 28l4-2" stroke="#2a8a2a" stroke-width="2"/></svg><span>wstes-chassis7 - R...</span></div>
  <div class="tk"><svg class="tic" width="28" height="32"><use href="#java"/></svg><span>RSCAD 3.000.4</span></div>
  <div class="tk"><svg class="tic" width="28" height="32"><use href="#java"/></svg><span>DRAFT 3.000.4</span></div>
  <div class="tk"><svg class="tic" width="28" height="32"><use href="#java"/></svg><span>RUNTIME 3.000.4</span></div>
  <div class="tk"><svg class="tic" width="30" height="34" viewBox="0 0 30 34"><path d="M5 2h20v30H5z" fill="#fff" stroke="#bbb"/><path d="M0 3h21v11H0z" fill="#a3201d"/><text class="pdf" x="3" y="11">PDF</text><path d="M11 16c1 6-3 11-6 13 5-3 12-5 17-3-4-1-8-6-11-10z" fill="none" stroke="#c32b22" stroke-width="2"/></svg><span>WECC Air Conditi...</span></div>
  <div class="tk"><svg class="tic" width="30" height="34" viewBox="0 0 30 34"><path d="M1 2h22v28H1z" fill="#2c8a3c" stroke="#fff"/><path d="M5 6l12 20M17 6L5 26" stroke="#fff" stroke-width="4"/><path d="M10 16l18 2-3 14-15-3z" fill="#d7ecd4"/></svg><span>Microsoft Excel - ...</span></div>
  <div class="tk"><svg class="tic" width="30" height="34" viewBox="0 0 30 34"><path d="M4 3h18l6 6v24H4z" fill="#f3f6fb" stroke="#b8c6d8"/><path d="M1 3h20v24H1z" fill="#1a5cb8"/><path d="M4 7l3 14 3-10 3 10 4-14" fill="none" stroke="#fff" stroke-width="2.500"/></svg><span>DailyTestNotes.d...</span></div>
  <div class="tray">
    <svg width="9" height="6"><path d="M0 6l4.500-6L9 6z" fill="#fff"/></svg>
    <svg width="16" height="20" viewBox="0 0 16 20"><path d="M1 7h4l5-5v16l-5-5H1z" fill="#e8edf2" stroke="#556"/><path d="M12 6q2 4 0 8M14 4q3 6 0 12" fill="none" stroke="#fff"/></svg>
    <svg width="16" height="22" viewBox="0 0 16 22"><path d="M4 4h9v11H4z" fill="#e6edf4" stroke="#223"/><path d="M1 1h5v8H1z" fill="#fff" stroke="#223"/><path d="M2 18h10" stroke="#223" stroke-width="2"/></svg>
    <div class="clock"><span>10:25 AM</span><span>6/17/2015</span></div>
    <i class="showdesk"></i>
  </div>
</footer>
<script src="plots.js"></script>
</body>
</html>
```
FILE: styles.css
```css
*{box-sizing:border-box}
html,body{margin:0;padding:0}
body{position:relative;width:1919px;height:1198px;overflow:hidden;background:#0a3a72;font-family:"Liberation Sans",Arial,sans-serif}
button{font:inherit;padding:0;margin:0}
i{display:block;font-style:normal}
.defs{position:absolute}

.win{position:absolute;display:flex;flex-direction:column;background:#d5e3f1;overflow:hidden;border-radius:6px 6px 0 0;box-shadow:inset 0 1px 0 #3a4a5e}
.win-left{left:0;top:3px;width:782px;height:1157px;border-right:2px solid #555}
.win-rdp{left:782px;top:3px;width:1137px;height:1079px}

.titlebar{display:flex;align-items:center;height:29px;flex:none;padding:4px 0 0 11px;background:linear-gradient(#b3c6da,#cbdbea 90%,#d5e3f1)}
.ti-java{margin-right:5px}
.title-text{font:11.500px "Open Sans",sans-serif;color:#243242}
.win-left .title-text{font-size:12px;letter-spacing:-.1px}
.wcs{margin-left:auto;margin-right:10px;display:flex;gap:3px;align-self:flex-start;margin-top:6px}
.wc{width:30px;height:16px;border:1px solid #6f8199;border-radius:3px;background:linear-gradient(#d4deea,#b4c4d6 50%,#a2b4c9);display:flex;align-items:center;justify-content:center}
.rdp-title{padding:3px 0 0 9px;height:27px}
.rdp-title svg:first-child{margin-right:4px}
.rdp-wcs{margin-right:4px;gap:5px;margin-top:7px}

.menubar{display:flex;align-items:center;gap:13px;height:21px;margin:0 8px 0 9px;padding:0 0 2px 6px;flex:none;background:linear-gradient(#f1f4f8,#dfe5ec);font-size:14px;color:#26303b;position:relative}
.menubar u{text-decoration:underline}
.help{margin-left:auto;align-self:stretch;display:flex;align-items:center;width:49px;padding-left:6px;background:#ecf0f5;margin-bottom:-2px;padding-bottom:2px}

.toolbar{display:flex;align-items:flex-start;height:38px;margin:2px 8px 3px 9px;padding-top:2px;background:#e9edf2;border-bottom:2px solid #d2d9e2;overflow:hidden;flex:none}
.grip{width:10px;height:32px;margin:0 4px 0 2px;flex:none;background:radial-gradient(#8e9aa8 .7px,transparent 1px) 0 0/3px 3px}
.grip.g2{margin-left:13px}
.grip.g3{margin-left:14px;width:9px;margin-right:5px}
.tb{width:32px;height:32px;margin-right:1px;flex:none;border:1px solid #c3ccd7;background:#eceff4;display:flex;align-items:center;justify-content:center}
.tb-s{width:24px;margin-top:3px;height:28px;background:#cfd5dd}
.ti{display:block;width:21px;height:21px;background:radial-gradient(#0c5a5a .6px,transparent .9px) 0 0/3px 3px,#000}
.ti svg{display:block;width:21px;height:21px;fill:none;stroke:#0ff;stroke-width:1.200}
.ti .w2{stroke-width:2}
.ti .r{fill:#f23a3a;stroke:none}
.ti .f{fill:#dfdfdf;stroke:none}
.ti .ballc{fill:url(#ball);stroke:none}
.ti.off{background:radial-gradient(#ddd .6px,transparent .9px) 0 0/3px 3px,#c4c4c4}
.ti.off svg{stroke:#dcdcdc}
.tb-s .ti{width:20px;height:22px}
.ti text{stroke:none;fill:#0ff;font:bold 10px "Liberation Serif",serif}
.ti .tt2{font-size:13px}

.zoombox{display:grid;grid-template-columns:25px 1fr 26px;grid-template-rows:15px 14px;width:157px;margin:1px 0 0 2px;flex:none;column-gap:0;row-gap:1px}
.zb{border:1px solid #a8b6c6;background:linear-gradient(#e7edf5,#bccadb);display:flex;align-items:center;justify-content:center;width:100%;height:15px}
.zslider{position:relative;margin:4px 8px 0 7px;height:7px;border:1px solid #9fb0c3;background:linear-gradient(90deg,#c4d6ec 0 43%,#e8edf3 43%)}
.zthumb{position:absolute;left:32px;top:-6px;width:14px;height:17px;background:linear-gradient(90deg,#fff,#b9c9dc);clip-path:polygon(0 0,100% 0,100% 60%,50% 100%,0 60%);}
.zval{grid-column:1/4;background:#fff;border:1px solid #9fb0c3;font-size:12.500px;line-height:12px;padding-left:1px;color:#222;height:14px}

.work{display:flex;height:1041px;flex:none;margin:0 8px 0 9px}
.toolcol{width:37px;flex:none;background:#eef0f3;display:flex;flex-direction:column;align-items:center;padding-top:2px}
.hgrip{width:32px;height:10px;margin-bottom:4px;flex:none;background:radial-gradient(#8e9aa8 .7px,transparent 1px) 0 0/3px 3px}
.toolcol .tb{margin:0 0 1px 1px}

.iframe{width:640px;flex:none;border:5px solid #6a87c0;border-right-width:6px;display:flex;flex-direction:column}
.if-title{height:22px;flex:none;display:flex;align-items:center;background:linear-gradient(#fff,#d9e5f3 50%,#bcd0e8);border-bottom:1px solid #8aa4c8;padding-left:5px;color:#1f2a38;font-size:12px;font-weight:bold}
.pencil{margin-right:6px;flex:none}
.if-path{width:381px;white-space:nowrap;letter-spacing:-.25px;font-size:12px}
.if-comp{width:131px;white-space:nowrap;letter-spacing:-.2px}
.if-s{width:22px}
.if-btn{flex:none}
.if-mid{display:flex;flex:none;height:992px}
.canvas{width:612px;height:992px;overflow:hidden;background:#fff;flex:none}
.cv-svg{display:block}
.vscroll{width:17px;flex:none;display:flex;flex-direction:column;background:#eef0f3}
.vb{height:16px;flex:none;border:1px solid #b0bfd2;background:#eef1f5;display:flex;align-items:center;justify-content:center}
.vthumb{height:316px;flex:none;background:linear-gradient(90deg,#b8cde8,#f6f9fd 50%,#b8cde8);border:1px solid #8aa6cc;display:flex;align-items:center;justify-content:center}
.vthumb i{width:9px;height:5px;border-top:1px solid #6a87c0;border-bottom:1px solid #6a87c0;box-shadow:inset 0 1.500px 0 -.5px #6a87c0}
.vtrack{flex:1}
.hscroll{height:16px;flex:none;display:flex;background:#ededed;border-top:1px solid #a9b9ce;padding:0 18px 0 3px}
.hb{width:13px;flex:none;border:1px solid #b6c2d0;background:#eef1f5;display:flex;align-items:center;justify-content:center}
.htrack{flex:1;position:relative;background:#ededed}
.hthumb{position:absolute;left:100px;top:0;bottom:0;width:78px;background:linear-gradient(#f6f9fd,#c5d7ee);border:1px solid #8aa6cc;display:flex;align-items:center;justify-content:center}
.hthumb i{width:5px;height:10px;border-left:1px solid #6a87c0;border-right:1px solid #6a87c0}

.scanpanel{flex:1;background:#ededed;margin-left:1px;display:flex;flex-direction:column;padding-top:2px;margin-bottom:2px;border-top:1px solid #d5e3f1}
.scan{height:25px;border:0;border-bottom:2px solid #9aa0a8;background:linear-gradient(#fff,#cfdeef);display:flex;align-items:center;justify-content:center;gap:5px;font-weight:bold;font-size:12.500px;color:#444}
.rack{height:21px;border-bottom:2px solid #9a9a9a;border-left:1px solid #c8c8c8;font-weight:bold;font-size:12.500px;color:#8b8b8b;display:flex;align-items:center;justify-content:center;position:relative}
.rled{position:absolute;left:2px;top:3px;width:14px;height:14px;border-radius:50%;background:#0e0;border:1.500px solid #0a4a0a;box-shadow:0 0 0 1.500px #aaa}

.msgrow{display:flex;align-items:stretch;height:15px;flex:none;margin:0 7px 0 9px;background:#fff;border:1px solid #000;border-width:2px 1px 1px;font-size:10px;color:#333;line-height:12px}
.msg{flex:1;padding-left:5px}
.msgb{width:69px;border:0;border-left:1px solid #b4c0ce;background:linear-gradient(#f3f6fa,#c7d6e8);font-size:10px;line-height:10px;color:#334;display:flex;align-items:center;justify-content:center;gap:4px;white-space:nowrap}
.vring{width:9px;height:9px;border-radius:50%;border:1.500px solid #222;flex:none}
.statusline{display:flex;height:8px;margin:0 7px 0 9px;background:#fff;font-size:11px;line-height:13px;overflow:hidden;flex:none;color:#111;padding-left:2px}
.statusline span{flex:1}
.st-sb{width:16px;border:1px solid #ccc;background:#eee}

.rdp-client{display:flex;height:1035px;flex:none;padding:0 8px 0 6px}
.remote{position:relative;width:1108px;height:1035px;flex:none;overflow:hidden;background:#0a3a72}
.behind{position:absolute;left:2px;top:540px;width:9px;height:90px;background:#3f74a8}
.bin{position:absolute;left:8px;top:8px;width:60px;display:flex;flex-direction:column;align-items:center;gap:4px}
.bin span{font:11.500px "Open Sans",sans-serif;color:#fff;white-space:nowrap;text-shadow:0 1px 2px #000}

.gewin{position:absolute;left:11px;top:95px;width:1300px;height:1000px;background:#bcd0e6;padding-left:7px;border-radius:5px 0 0 0;border:solid #b9cce2;border-width:1px 0 0 1px;box-shadow:0 0 0 1px #20364f}
.ge-title{display:flex;align-items:center;gap:3px;height:28px;margin-left:-6px;padding:3px 0 0 8px;background:linear-gradient(#a5bdda,#c8d8e9);font:12px "Open Sans",sans-serif;color:#111;letter-spacing:-.1px}
.ge-inner{border-left:1px solid #666;border-top:1px solid #666;background:#e0e0e0;height:960px}
.ge-tools{display:flex;height:25px;background:#f0f0f0;border-bottom:1px solid #8a8a8a;padding:2px 0 0 52px}
.gt{width:22px;height:21px;border:1px solid #8c8c8c;background:#f0f0f0;display:flex;align-items:center;justify-content:center}
.g-run{border-color:#ccc;margin-right:25px}
.g-stop{border-right:0}
.ge-top{height:103px;padding:20px 0 0 688px}
.islandbox{width:324px;height:85px;border:1px solid #cfcfcf;background:#dcdcdc;display:flex;align-items:center;padding-left:10px;font-family:"Open Sans",sans-serif}
.ring{position:relative;width:164px;height:41px;flex:none;border-radius:4px;border:1px solid #a8a8a8;background:linear-gradient(#ececec,#cacaca);box-shadow:1px 2px 1px #888;font-size:16px;color:#333;display:flex;align-items:center;padding-left:24px;margin-top:-15px}
.ring-arrow{position:absolute;right:5px;top:6px;width:12px;height:12px;border:1px solid #777;background:#eee;box-shadow:inset 0 0 0 2px #eee,inset 0 0 0 3px #555}
.starttest{margin-left:17px;width:115px;height:43px;flex:none;margin-top:-14px;border-radius:3px;border:1px solid #a8a8a8;background:linear-gradient(#ececec,#cacaca);box-shadow:1px 2px 1px #888;display:flex;align-items:center;gap:14px;padding-left:20px;font-size:10.500px;color:#222}
.tabs{display:flex;gap:2px;height:25px;margin-left:29px;font:11px "Open Sans",sans-serif;color:#222;position:relative;z-index:1}
.tab{flex:none;height:23px;margin-top:2px;background:#b1b1b1;border:1px solid #c4c4c4;border-right-color:#777;border-bottom:0;border-radius:3px 3px 0 0;display:flex;align-items:center;justify-content:center}
.tab-on{width:67px;height:29px;margin-top:0;padding-bottom:7px;border-right-color:#777}
.w45{width:45px}.w59{width:59px}.w76{width:76px}.w70{width:70px}.w68{width:68px}

.panel{display:block;margin-left:29px;background:#b1b1b1;border-top:1px solid #c8c8c8;overflow:hidden}
.panel text{font-family:"Open Sans",sans-serif;fill:#111}
.panel .c{text-anchor:middle}
.panel .r{text-anchor:end}
.l11{font-size:10.500px}
.l12{font-size:11px}
.l15{font-size:16px}
.l16{font-size:16.500px}
.l18{font-size:18.500px}
.iv{font-size:11px;text-anchor:end}
.tf{font-size:7px;text-anchor:middle}
.ps{font-size:11px}
.ln{fill:none;stroke:#000;stroke-width:2.500}
.lnb{fill:none;stroke:#000;stroke-width:5}
.bus{fill:none;stroke:#000;stroke-width:4}
.coil{fill:none;stroke:#000;stroke-width:1}
.sep{stroke:#111;stroke-width:1}
.frameb{stroke:#7e7e7e;stroke-width:2}
.tblines{fill:none;stroke:#8a8a8a}
.lg{fill:none;stroke:#0a9a8f;stroke-width:.7}
.panel .pge{font-size:6px;fill:#fff}
.panel .lo{font-family:"Liberation Sans",sans-serif;font-size:13px;fill:#0a9a8f}
.lob{font-size:18px}

/* rscad canvas */
.cv-svg text{font-family:"Liberation Sans",sans-serif;fill:#222}
.lt{color:#bdbdbd}
.dk{color:#7b7b7b}
.fo{fill:#f5f5f5;stroke:#b0b0b0;stroke-width:2}
.fi{fill:#fff;stroke:#000;stroke-width:1.500}
.hd{fill:#eee}
.hl{stroke:#000;stroke-width:2.500}
.pb{fill:#cdd8e8;stroke:#9eb0c8}
.ph{fill:none;stroke:#222;stroke-width:1.100}
.gr{fill:none;stroke:#7d7d7d;stroke-width:1.200}
.ax{fill:none;stroke:#000;stroke-width:1.200}
.wr,.wk,.wb{fill:none;stroke-width:1.500}
.wr{stroke:#f00}.wk{stroke:#000}.wb{stroke:#00f}
.thin{stroke-width:1}
.tk9{font-size:10px}
.ty{font-size:10px;text-anchor:end}
.tyc{font-size:10px;text-anchor:middle}
.tyr{font-size:10px;text-anchor:middle}
.cn4{fill:#b0b0b0}
.tk{stroke:#9fb2c8;stroke-width:1}
.tkd{stroke:#dcdcdc;stroke-width:1}
.cv-svg .sn{font-size:9px;text-anchor:end;fill:#333}
.cv-svg .sd{font-size:9px;text-anchor:end;fill:#969696}
.cv-svg .h9{font-size:9.500px;text-anchor:middle;fill:#222}
.cv-svg .dv{font-size:9px;text-anchor:middle;fill:#3a3a3a}
.cv-svg .kw{font-size:13.500px;font-weight:bold;text-anchor:middle;fill:#3c3c3c}
.cv-svg .vdim{font-size:12.500px;fill:#bcd0ea}
.cv-svg .cn{font-size:12.500px;text-anchor:middle;fill:#1c1c3a}
.cv-svg .cv{font-size:12px;text-anchor:middle;letter-spacing:.7px;fill:#111}
.cv-svg .v12{font-size:12.500px;fill:#111}
.cv-svg .vd12{font-size:12.500px;fill:#bcd0ea}
.cv-svg .v14{font-size:13.500px;text-anchor:middle;fill:#222}
.cv-svg .rm{font-size:12px;fill:#222}

/* right scrollbars */
.rv{width:15px;flex:none;display:flex;flex-direction:column;background:#f2f2f2}
.rv-thumb{height:875px;flex:none;padding-top:20px;background:linear-gradient(90deg,#f2f2f2,#d8d8d8 50%,#bdbdbd);border:1px solid #9a9a9a;border-radius:2px;display:flex;align-items:center;justify-content:center}
.rv-thumb i{width:8px;height:5px;border-top:1px solid #666;border-bottom:1px solid #666}
.rv-track{flex:1}
.rv-btn{height:15px;border:0;background:#eee;display:flex;align-items:center;justify-content:center}
.rh{display:flex;height:15px;flex:none;margin:0 8px 0 6px;background:#f2f2f2;padding-left:6px}
.rh-btn{width:10px;border:0;background:#f2f2f2;display:flex;align-items:center;justify-content:center}
.rh-thumb{width:620px;background:linear-gradient(#f2f2f2,#d5d5d5 50%,#bdbdbd);border:1px solid #9a9a9a;display:flex;align-items:center;justify-content:center}
.rh-thumb i{width:8px;height:8px;border-left:1px solid #666;border-right:1px solid #666}
.rh-track{flex:1}

/* taskbar */
.taskbar{position:absolute;left:0;top:1160px;width:1919px;height:38px;display:flex;background:linear-gradient(#8c9cb0,#8496ab);border-top:1px solid #22303f;box-shadow:inset 0 1px 0 #b0bccb;font:11.500px "Open Sans",sans-serif;color:#fff}
.orb{width:57px;flex:none;margin-right:3px;display:flex;align-items:center;justify-content:center;background:linear-gradient(#7f8fa4,#6f8097)}
.tk{width:158px;flex:none;margin-right:3px;display:flex;align-items:center;border:1px solid #5a6a7e;border-radius:3px;background:linear-gradient(#a6b3c3,#8c9db2);box-shadow:inset 0 0 0 1px #bcc7d4;white-space:nowrap;overflow:hidden;text-shadow:0 0 2px #334}
.tic{margin:0 5px 0 7px;flex:none}
.tk-f{width:63px;margin:0 2px 0 -2px;justify-content:center;background:linear-gradient(#7a8aa0,#6e7f96)}
.tray{margin-left:auto;width:160px;display:flex;align-items:center;gap:13px;padding-left:7px;position:relative}
.clock{display:flex;flex-direction:column;align-items:center;width:56px;margin-left:2px;font-size:11.500px;line-height:16px}
.pdf{font:bold 7px "Liberation Sans",sans-serif;fill:#fff}
.showdesk{position:absolute;right:0;top:0;bottom:0;width:12px;background:linear-gradient(90deg,#6e7f96,#9dabbc);border-left:1px solid #3c4a5c}
```
FILE: plots.js
```js
// Draws the sampled traces of the RSCAD plots.
(function () {
  var seed = 12345;
  function rnd() { seed = (seed * 16807) % 2147483647; return seed / 2147483647 - 0.5; }
  function sine(id, x0, x1, cy, amp, crest, period, noise, step) {
    var pts = [];
    for (var x = x0; x <= x1; x += step) {
      var y = cy - amp * Math.cos(2 * Math.PI * (x - crest) / period) + rnd() * noise;
      pts.push(x.toFixed(1) + ',' + y.toFixed(1));
    }
    var el = document.getElementById(id);
    if (el) el.setAttribute('points', pts.join(' '));
  }
  var T = 64.5;
  sine('p1r', 40, 145, 324, 72, 54, T, 14, 0.5);
  sine('p1k', 40, 145, 324, 72, 97, T, 14, 0.5);
  sine('p1b', 40, 145, 324, 72, 75.5, T, 14, 0.5);
  sine('p2r', 40, 145, 602, 67, 54, T, 4, 0.5);
  sine('p2k', 40, 145, 602, 67, 97, T, 4, 0.5);
  sine('p2b', 40, 145, 602, 67, 75.5, T, 4, 0.5);
  sine('p3r', 40, 145, 889, 85, 59, T, 4, 0.5);
  sine('p3k', 40, 145, 889, 85, 102, T, 4, 0.5);
  sine('p3b', 40, 145, 889, 85, 80.5, T, 4, 0.5);
  sine('pAr', 603, 680, 320, 2, 603, 7, 0.6, 1);
  sine('pBr', 619, 680, 693, 2, 619, 3, 3, 0.5);
  sine('pCk', 598, 680, 908.5, 0.5, 598, 4, 2, 1);
  sine('pCb', 598, 680, 910.5, 0.5, 600, 4, 2, 1);
})();
```
